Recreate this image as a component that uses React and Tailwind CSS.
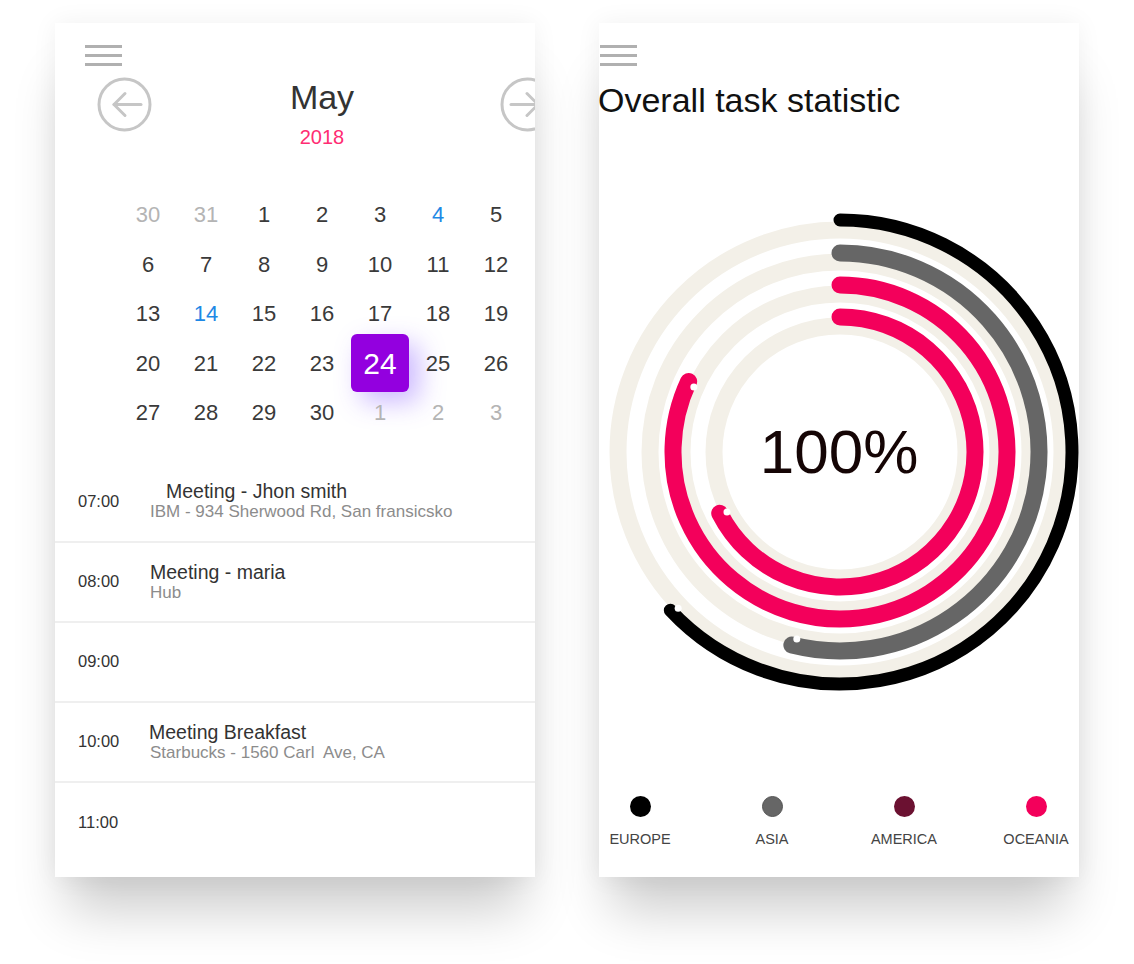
import React from 'react'

const weeks = [
  [['30', 'muted'], ['31', 'muted'], ['1'], ['2'], ['3'], ['4', 'blue'], ['5']],
  [['6'], ['7'], ['8'], ['9'], ['10'], ['11'], ['12']],
  [['13'], ['14', 'blue'], ['15'], ['16'], ['17'], ['18'], ['19']],
  [['20'], ['21'], ['22'], ['23'], ['24', 'selected'], ['25'], ['26']],
  [['27'], ['28'], ['29'], ['30'], ['1', 'muted'], ['2', 'muted'], ['3', 'muted']],
]

const schedule = [
  { time: '07:00', title: 'Meeting - Jhon smith', sub: 'IBM - 934 Sherwood Rd, San fransicsko', indent: 'pl-[16px]' },
  { time: '08:00', title: 'Meeting - maria', sub: 'Hub' },
  { time: '09:00' },
  { time: '10:00', title: 'Meeting Breakfast', sub: 'Starbucks - 1560 Carl  Ave, CA', indent: '-ml-[1px]' },
  { time: '11:00' },
]

const CX = 241
const CY = 260

const tracks = [222, 190, 158, 126]
const arcs = [
  { r: 232, sweep: 227, color: '#000000', width: 13 },
  { r: 199, sweep: 194, color: '#666666', width: 17 },
  { r: 167, sweep: 295, color: '#f3005b', width: 17 },
  { r: 135, sweep: 243, color: '#f3005b', width: 17 },
]

const legend = [
  { label: 'EUROPE', color: 'bg-black' },
  { label: 'ASIA', color: 'bg-[#666666] border border-[#555]' },
  { label: 'AMERICA', color: 'bg-[#6b1131]' },
  { label: 'OCEANIA', color: 'bg-[#f3005b]' },
]

function point(r, deg) {
  const a = ((deg - 90) * Math.PI) / 180
  return [CX + r * Math.cos(a), CY + r * Math.sin(a)]
}

function arcPath(r, sweep) {
  const [x0, y0] = point(r, 0)
  const [x1, y1] = point(r, sweep)
  return `M ${x0} ${y0} A ${r} ${r} 0 ${sweep > 180 ? 1 : 0} 1 ${x1} ${y1}`
}

function Hamburger() {
  return (
    <div className="flex flex-col gap-[6px] w-[37px]">
      <div className="h-[3px] bg-[#b0b0b0]" />
      <div className="h-[3px] bg-[#b0b0b0]" />
      <div className="h-[3px] bg-[#b0b0b0]" />
    </div>
  )
}

function ArrowCircle({ dir }) {
  return (
    <svg width="55" height="55" viewBox="0 0 55 55" className="shrink-0">
      <circle cx="27.5" cy="27.5" r="25.5" fill="none" stroke="#c6c6c6" strokeWidth="3" />
      {dir === 'left' ? (
        <g fill="none" stroke="#c6c6c6" strokeWidth="3" strokeLinecap="round" strokeLinejoin="round">
          <path d="M17 27.5 H44" />
          <path d="M28 16.5 L17 27.5 L28 38.5" />
        </g>
      ) : (
        <g fill="none" stroke="#c6c6c6" strokeWidth="3" strokeLinecap="round" strokeLinejoin="round">
          <path d="M11 27.5 H38" />
          <path d="M27 16.5 L38 27.5 L27 38.5" />
        </g>
      )}
    </svg>
  )
}

function CalendarCard() {
  return (
    <div className="w-[480px] h-[854px] shrink-0 bg-white overflow-hidden shadow-[0_45px_50px_-12px_rgba(0,0,0,0.2),0_0_24px_rgba(0,0,0,0.06)]">
      <div className="pt-[22px] pl-[30px]">
        <Hamburger />
      </div>

      <div className="flex items-start mt-[11px] pl-[42px]">
        <ArrowCircle dir="left" />
        <div className="w-[348px] shrink-0 flex flex-col items-center pr-[8px]">
          <div className="mt-[3px] text-[34px] leading-none text-[#333]">May</div>
          <div className="mt-[13px] text-[20px] leading-none text-[#ff2d73]">2018</div>
        </div>
        <ArrowCircle dir="right" />
      </div>

      <div className="ml-[64px] w-[406px] mt-[43px] grid grid-cols-7">
        {weeks.flat().map(([d, kind], i) => (
          <div key={i} className="h-[49.5px] flex items-center justify-center">
            {kind === 'selected' ? (
              <div className="w-[58px] h-[58px] shrink-0 rounded-[6px] bg-[#9300df] text-white text-[30px] flex items-center justify-center shadow-[10px_10px_26px_rgba(120,70,255,0.38)]">
                {d}
              </div>
            ) : (
              <span
                className={
                  'text-[22px] ' +
                  (kind === 'muted' ? 'text-[#b4b4b4]' : kind === 'blue' ? 'text-[#1e88e5]' : 'text-[#3a3a3a]')
                }
              >
                {d}
              </span>
            )}
          </div>
        ))}
      </div>

      <div className="mt-[24px]">
        {schedule.map((row, i) => (
          <div
            key={row.time}
            className={
              'flex items-center ' +
              (i === 0 ? 'h-[81px] ' : 'h-[80px] ') +
              (i < schedule.length - 1 ? 'border-b-2 border-[#efefef]' : '')
            }
          >
            <div className="w-[95px] shrink-0 pl-[23px] text-[16.5px] text-[#333]">{row.time}</div>
            {row.title && (
              <div className="flex flex-col">
                <div className={'text-[19.5px] leading-[22px] text-[#333] whitespace-pre ' + (row.indent || '')}>{row.title}</div>
                <div className="text-[17px] leading-[20px] text-[#8c8c8c] whitespace-pre">{row.sub}</div>
              </div>
            )}
          </div>
        ))}
      </div>
    </div>
  )
}

function StatisticCard() {
  return (
    <div className="w-[480px] h-[854px] shrink-0 bg-white overflow-hidden shadow-[0_45px_50px_-12px_rgba(0,0,0,0.2),0_0_24px_rgba(0,0,0,0.06)]">
      <div className="pt-[22px] pl-[1px]">
        <Hamburger />
      </div>
      <div className="mt-[17px] -ml-[1px] text-[34px] leading-none text-[#111]">Overall task statistic</div>

      <svg width="480" height="520" viewBox="0 0 480 520" className="block mt-[75px]">
        {tracks.map((r) => (
          <circle key={r} cx={CX} cy={CY} r={r} fill="none" stroke="#f3f0e8" strokeWidth="17" />
        ))}
        {arcs.map((a) => (
          <path
            key={a.r}
            d={arcPath(a.r, a.sweep)}
            fill="none"
            stroke={a.color}
            strokeWidth={a.width}
            strokeLinecap="round"
          />
        ))}
        {arcs.map((a) => {
          const [x, y] = point(a.r - 7, a.sweep - 1)
          return <circle key={'d' + a.r} cx={x} cy={y} r="3.5" fill="#fff" />
        })}
        <text
          x={CX - 1}
          y="281"
          textAnchor="middle"
          fontSize="62"
          fill="#150505"
          fontFamily="'Liberation Sans', Arial, sans-serif"
        >
          100%
        </text>
      </svg>

      <div className="mt-[84px] flex gap-[52px] pl-[1px]">
        {legend.map((l) => (
          <div key={l.label} className="w-[80px] flex flex-col items-center">
            <div className={'w-[21px] h-[21px] rounded-full ' + l.color} />
            <div className="mt-[15px] text-[14.5px] leading-none text-[#444]">{l.label}</div>
          </div>
        ))}
      </div>
    </div>
  )
}

export default function App() {
  return (
    <div className="w-[1134px] h-[964px] bg-white overflow-hidden font-[family-name:Liberation_Sans,Arial,sans-serif]">
      <div className="flex gap-[64px] pl-[55px] pt-[23px]">
        <CalendarCard />
        <StatisticCard />
      </div>
    </div>
  )
}
